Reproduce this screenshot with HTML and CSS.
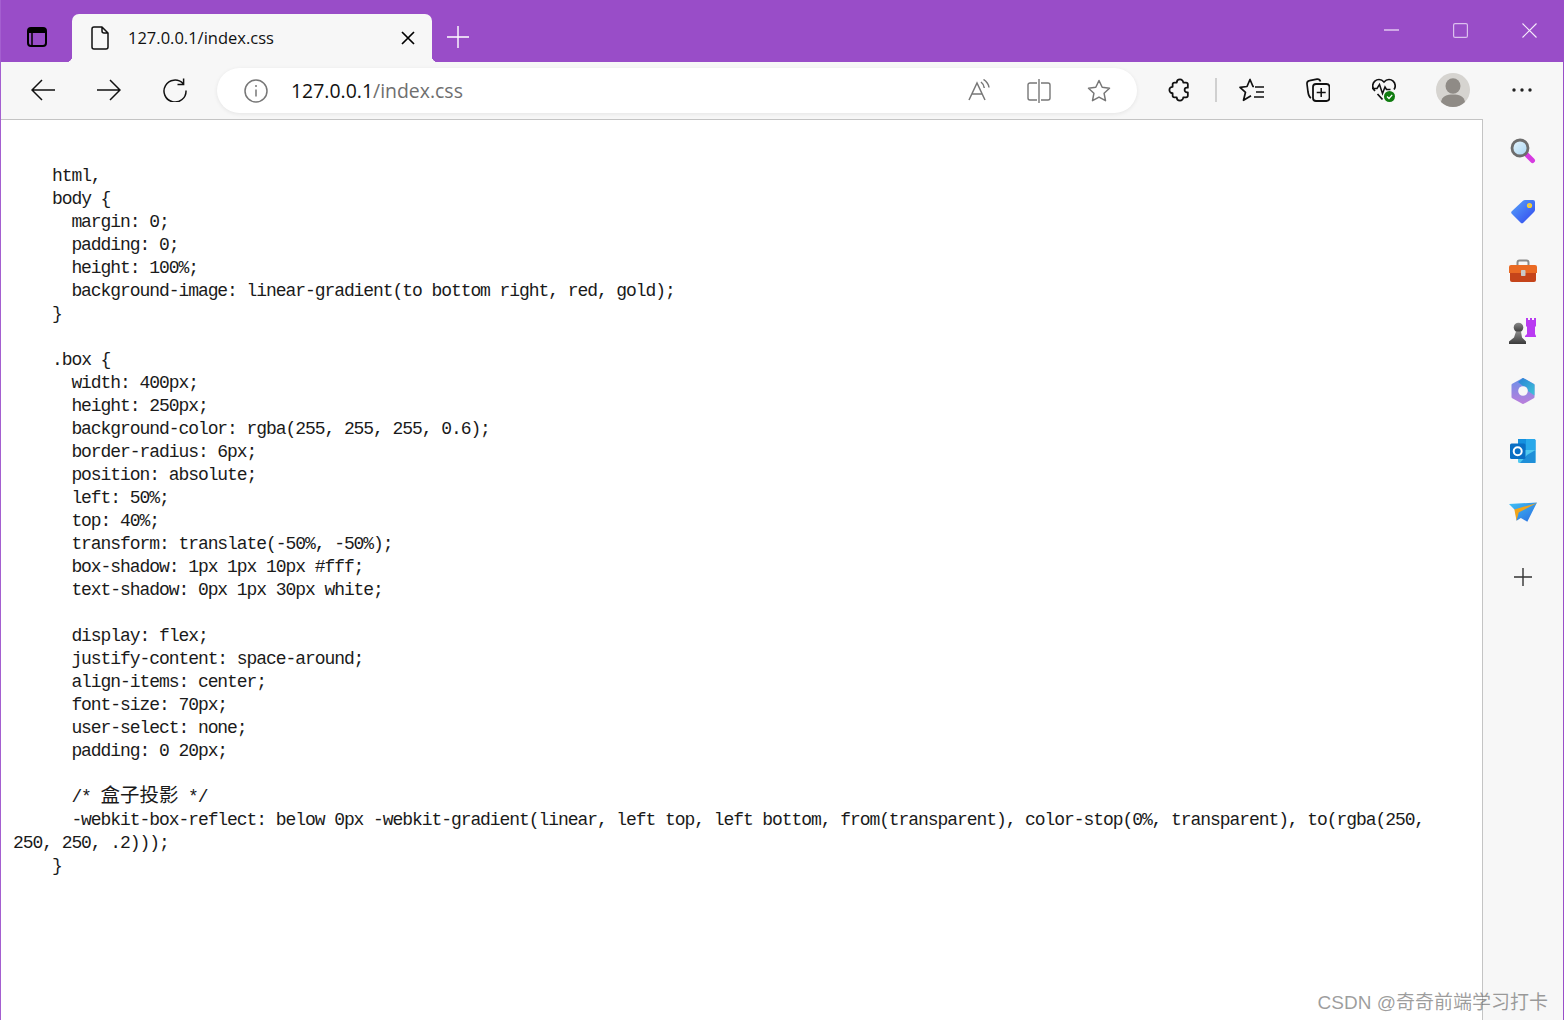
FILE: index.html
```html
<!DOCTYPE html>
<html lang="en">
<head>
<meta charset="utf-8">
<title>127.0.0.1/index.css</title>
<link rel="stylesheet" href="styles.css">
</head>
<body>
<div class="window">
  <header class="titlebar">
    <div class="tab-actions">
      <svg class="ic20" viewBox="0 0 20 20"><rect x="1" y="1" width="18" height="18" rx="3" fill="none" stroke="#000" stroke-width="2"/><path d="M1 4a3 3 0 0 1 3-3h12a3 3 0 0 1 3 3v2H1z" fill="#000"/><path d="M5 6v13" stroke="#000" stroke-width="1.5"/></svg>
    </div>
    <div class="tab">
      <svg class="ic-doc" viewBox="0 0 18 24"><path d="M1 3a2 2 0 0 1 2-2h8l6 6v14a2 2 0 0 1-2 2H3a2 2 0 0 1-2-2zM11 1v4a2 2 0 0 0 2 2h4" fill="none" stroke="#111" stroke-width="1.5" stroke-linejoin="round"/></svg>
      <span class="tab-title">127.0.0.1/index.css</span>
      <svg class="ic-x" viewBox="0 0 14 14"><path d="M1 1l12 12M13 1L1 13" stroke="#000" stroke-width="1.7"/></svg>
    </div>
    <svg class="ic-new" viewBox="0 0 22 22"><path d="M11 0v22M0 11h22" stroke="#fff" stroke-width="1.4"/></svg>
    <div class="win-controls">
      <svg class="win-btn" viewBox="0 0 15 15"><path d="M0 7h15" stroke="#f3e6fa" stroke-width="1.2"/></svg>
      <svg class="win-btn" viewBox="0 0 15 15"><rect x=".6" y=".6" width="13.8" height="13.8" rx="1.5" fill="none" stroke="#dcc0ee" stroke-width="1.2"/></svg>
      <svg class="win-btn" viewBox="0 0 15 15"><path d="M.5.5l14 14M14.5.5l-14 14" stroke="#f6ecfb" stroke-width="1.1"/></svg>
    </div>
  </header>

  <nav class="toolbar">
    <div class="btn"><svg class="ic24" viewBox="0 0 24 24"><path d="M1 12h23M11 2L1 12l10 10" fill="none" stroke="#111" stroke-width="1.5"/></svg></div>
    <div class="btn"><svg class="ic24" viewBox="0 0 24 24"><path d="M0 12h23M13 2l10 10-10 10" fill="none" stroke="#111" stroke-width="1.5"/></svg></div>
    <div class="btn"><svg class="ic24" viewBox="0 0 24 24"><path d="M20 5.500A11 11 0 1 0 23 12.500M20.600 .5V6.600H14.500" fill="none" stroke="#111" stroke-width="1.5"/></svg></div>
    <div class="address">
      <svg class="ic-info" viewBox="0 0 24 24"><circle cx="12" cy="12" r="11" fill="none" stroke="#777" stroke-width="1.5"/><path d="M12 10.500v7" stroke="#777" stroke-width="1.5"/><circle cx="12" cy="7" r="1" fill="#777"/></svg>
      <span class="url"><span class="url-host">127.0.0.1</span>/index.css</span>
      <svg class="ic24 addr-read" viewBox="0 0 24 24"><path d="M1 21L9 4l8 17M4 15h10M13 3c2 1.500 3 3.500 3.300 6M15.500 .5c3 2 5 4.500 5.500 8" fill="none" stroke="#777" stroke-width="1.5"/></svg>
      <svg class="ic24 addr-split" viewBox="0 0 24 24"><path d="M10 4H3a2 2 0 0 0-2 2v13a2 2 0 0 0 2 2h7M14 4h7a2 2 0 0 1 2 2v13a2 2 0 0 1-2 2h-7M12 0v24" fill="none" stroke="#777" stroke-width="1.4"/></svg>
      <svg class="ic24 addr-star" viewBox="0 0 24 24"><path d="M12 1.500l3.200 6.800 7.300.9-5.400 5.100 1.400 7.400L12 18.100 5.500 21.700l1.400-7.400L1.500 9.200l7.300-.9z" fill="none" stroke="#777" stroke-width="1.5" stroke-linejoin="round"/></svg>
    </div>
    <div class="btn btn-first"><svg class="ic24" viewBox="0 0 24 26"><path d="M8.500 5a3.500 3.500 0 0 1 7 0h3a2 2 0 0 1 2 2v3.500h-1a2.500 2.500 0 0 0 0 5h1V19a2 2 0 0 1-2 2h-3a3.500 3.500 0 0 1-7 0H6a2 2 0 0 1-2-2v-2.500a3.500 3.500 0 0 1 0-7V7a2 2 0 0 1 2-2z" fill="none" stroke="#111" stroke-width="1.900" stroke-linejoin="round"/></svg></div>
    <span class="divider"></span>
    <div class="btn"><svg class="ic26" viewBox="0 0 26 24"><path d="M15 8.500h-1L11 1.500 8 8.500l-7 .8 5.500 5-2 8 7.500-4.500M16 9h9M17 14h8M15 19h10" fill="none" stroke="#111" stroke-width="1.700" stroke-linejoin="round"/></svg></div>
    <div class="btn"><svg class="ic24" viewBox="0 0 24 24"><path d="M5 20C3 19 2.500 17 2 14L1 6c-.2-2 .6-3 2.500-3.300L11 1.200c2-.3 3 .6 3.500 2.300" fill="none" stroke="#111" stroke-width="1.7"/><rect x="7" y="6" width="16.500" height="17" rx="3" fill="none" stroke="#111" stroke-width="1.800"/><path d="M15.200 10v9M10.700 14.500h9" stroke="#111" stroke-width="1.500"/></svg></div>
    <div class="btn"><svg class="ic24" viewBox="0 0 24 24"><path d="M3 13C1 11 .5 9.500.7 7.500 1 4 4 1.500 7 1.500c2 0 3.700 1 5 2.500 1.300-1.500 3-2.500 5-2.500 3 0 6 2.500 6.200 6 .1 1.500-.4 3-1.200 4M5.500 16l5 5.500" fill="none" stroke="#111" stroke-width="1.700"/><path d="M0 10.500h5l2.500-4 3 9 2.500-6.500 1.500 2.500h4" fill="none" stroke="#111" stroke-width="1.500"/><circle cx="17.500" cy="18.500" r="5.500" fill="#107c10"/><path d="M15 18.500l2 2 3.200-3.600" fill="none" stroke="#fff" stroke-width="1.300"/></svg></div>
    <div class="btn btn-avatar"><svg class="ic-avatar" viewBox="0 0 34 34"><circle cx="17" cy="17" r="17" fill="#d6d4d0"/><ellipse cx="17" cy="13" rx="7.500" ry="7.800" fill="#8f8b86"/><path d="M5 29c1-6 6-7.500 12-7.500s11 1.500 12 7.500a17 17 0 0 1-24 0z" fill="#8f8b86"/></svg></div>
    <div class="btn"><svg class="ic-dots" viewBox="0 0 20 4"><circle cx="2" cy="2" r="1.700" fill="#222"/><circle cx="10" cy="2" r="1.700" fill="#222"/><circle cx="18" cy="2" r="1.700" fill="#222"/></svg></div>
  </nav>

  <div class="main">
<pre class="code">    html,
    body {
      margin: 0;
      padding: 0;
      height: 100%;
      background-image: linear-gradient(to bottom right, red, gold);
    }

    .box {
      width: 400px;
      height: 250px;
      background-color: rgba(255, 255, 255, 0.6);
      border-radius: 6px;
      position: absolute;
      left: 50%;
      top: 40%;
      transform: translate(-50%, -50%);
      box-shadow: 1px 1px 10px #fff;
      text-shadow: 0px 1px 30px white;

      display: flex;
      justify-content: space-around;
      align-items: center;
      font-size: 70px;
      user-select: none;
      padding: 0 20px;

      /* <span class="cjk">盒子投影</span> */
      -webkit-box-reflect: below 0px -webkit-gradient(linear, left top, left bottom, from(transparent), color-stop(0%, transparent), to(rgba(250, 250, 250, .2)));
    }
</pre>
    <aside class="sidebar">
      <div class="side-item"><svg class="ic26" viewBox="0 0 26 26"><defs><linearGradient id="gl" x1="0" y1="0" x2="1" y2="1"><stop offset="0" stop-color="#e8f6fd"/><stop offset="1" stop-color="#a5d4f2"/></linearGradient></defs><path d="M15.500 15.500l7 7" stroke="#d63be0" stroke-width="5" stroke-linecap="round"/><circle cx="10" cy="10" r="8" fill="url(#gl)" stroke="#6d6d6d" stroke-width="2.800"/></svg></div>
      <div class="side-item"><svg class="ic26" viewBox="0 -1 26 26"><defs><linearGradient id="gt" x1="0" y1="0" x2="1" y2="1"><stop offset="0" stop-color="#57a5fa"/><stop offset="1" stop-color="#3246ee"/></linearGradient></defs><path d="M15 1h8a2 2 0 0 1 2 2v8a3 3 0 0 1-1 2L13.500 23.500a2 2 0 0 1-3 0L2 15a2 2 0 0 1 0-3L13 1.800A3 3 0 0 1 15 1z" fill="url(#gt)"/><circle cx="19.500" cy="6.500" r="2.600" fill="#ffd21f"/><circle cx="19.500" cy="6.500" r="1" fill="#9db4e8"/></svg></div>
      <div class="side-item"><svg class="ic28" viewBox="0 0 28 26"><path d="M8.500 7V4.500A2 2 0 0 1 10.500 2.500h7a2 2 0 0 1 2 2V7" fill="none" stroke="#8a8a8a" stroke-width="2"/><path d="M0 9a2 2 0 0 1 2-2h24a2 2 0 0 1 2 2v6H0z" fill="#ea6a24"/><path d="M1 15h26v7a2 2 0 0 1-2 2H3a2 2 0 0 1-2-2z" fill="#c5441a"/><rect x="12" y="12" width="4.500" height="6" rx=".8" fill="#c9c9c9"/></svg></div>
      <div class="side-item"><svg class="ic28" viewBox="0 0 28 28"><defs><linearGradient id="gp" x1="0" y1="0" x2="0" y2="1"><stop offset="0" stop-color="#8a8a8a"/><stop offset="1" stop-color="#3a3a3a"/></linearGradient></defs><path d="M17 1h2v2h2V1h2v2h2V1h2v8l-1 1v7l1 2v1H16v-1l2-2v-7l-1-1z" fill="#b93af2"/><circle cx="9.500" cy="10.500" r="4.800" fill="url(#gp)"/><path d="M7 14.500h5l1 6 4 4v2.500H0v-2.500l5-4z" fill="url(#gp)"/></svg></div>
      <div class="side-item"><svg class="ic26" viewBox="0 0 26 26"><defs><linearGradient id="gm1" x1="0" y1="0" x2="1" y2="1"><stop offset="0" stop-color="#2a7fd6"/><stop offset="1" stop-color="#40c4d8"/></linearGradient><linearGradient id="gm2" x1="0" y1="0" x2="0" y2="1"><stop offset="0" stop-color="#6f8fe8"/><stop offset="1" stop-color="#b77fdc"/></linearGradient></defs><path d="M13 1.500l10 5.500v12l-10 5.500L3 19V7z" fill="url(#gm2)" stroke="url(#gm2)" stroke-width="3" stroke-linejoin="round"/><path d="M13 0l11.500 6.500v11L18 13a5 5 0 0 0-5-5L8 4z" fill="url(#gm1)"/><circle cx="13" cy="13" r="4.800" fill="#f7f7f7"/></svg></div>
      <div class="side-item"><svg class="ic26" viewBox="0 0 26 26"><path d="M8 1h16a1.500 1.500 0 0 1 1.500 1.500V12H8z" fill="#1490df"/><path d="M16 1h8a1.500 1.500 0 0 1 1.500 1.500V12H16z" fill="#28a8ea"/><path d="M8 12h17.500v11.500A1.500 1.500 0 0 1 24 25H9.500A1.500 1.500 0 0 1 8 23.500z" fill="#50c8f0"/><path d="M17 17l8.500-5v13H10z" fill="#1f8fd8"/><rect x="0" y="5.500" width="15.500" height="15.500" rx="1.500" fill="#0a6fc4"/><circle cx="7.700" cy="13.200" r="4" fill="none" stroke="#fff" stroke-width="2"/></svg></div>
      <div class="side-item"><svg class="ic28" viewBox="0 -2 26 20"><defs><linearGradient id="gs" x1="0" y1="0" x2="1" y2="1"><stop offset="0" stop-color="#3fc2f5"/><stop offset="1" stop-color="#2b6be0"/></linearGradient></defs><path d="M0 1.500L26 0 17 18l-6-3.500L7 17 6 7.500z" fill="url(#gs)"/><path d="M5 6.500L26 .5 9 9.500 7 17z" fill="#f2a51a"/></svg></div>
      <div class="side-item side-add"><svg class="ic-add" viewBox="0 0 18 18"><path d="M9 0v18M0 9h18" stroke="#333" stroke-width="1.400"/></svg></div>
    </aside>
  </div>
  <div class="watermark">CSDN @奇奇前端学习打卡</div>
</div>
</body>
</html>
```
FILE: styles.css
```css
* { box-sizing: border-box; }
html, body { margin: 0; padding: 0; height: 100%; background: #fff; overflow: hidden; }
svg { display: block; flex: none; }

.window {
  position: relative;
  height: 1020px;
  display: flex;
  flex-direction: column;
  border-left: 1px solid #a45fd0;
  border-right: 1px solid #994ec9;
}

/* title bar */
.titlebar {
  height: 62px;
  flex: none;
  background: #994dc8;
  display: flex;
  align-items: flex-start;
}
.tab-actions { width: 71px; height: 62px; padding: 27px 0 0 26px; }
.ic20 { width: 20px; height: 20px; }
.tab {
  position: relative;
  width: 360px;
  height: 48px;
  margin-top: 14px;
  background: #f7f7f7;
  border-radius: 7px 7px 0 0;
  display: flex;
  align-items: center;
  padding-left: 19px;
}
.tab::before, .tab::after {
  content: "";
  position: absolute;
  bottom: 0;
  width: 6px;
  height: 6px;
}
.tab::before { left: -6px; background: radial-gradient(circle at 0 0, #994dc8 6px, #f7f7f7 6.5px); }
.tab::after { right: -6px; background: radial-gradient(circle at 100% 0, #994dc8 6px, #f7f7f7 6.5px); }
.ic-doc { width: 18px; height: 24px; }
.tab-title {
  margin-left: 19px;
  font: 16.5px/24px "Open Sans", sans-serif;
  color: #111;
  flex: 1;
}
.ic-x { width: 14px; height: 14px; margin-right: 17px; }
.ic-new { width: 22px; height: 22px; margin: 26px 0 0 15px; }
.win-controls {
  margin-left: auto;
  display: flex;
  gap: 54px;
  padding: 23px 26px 0 0;
}
.win-btn { width: 15px; height: 15px; }

/* toolbar */
.toolbar {
  height: 57px;
  flex: none;
  background: #f7f7f7;
  display: flex;
  align-items: center;
  padding-left: 9px;
}
.btn {
  width: 66px;
  height: 45px;
  margin-bottom: 2px;
  flex: none;
  display: flex;
  align-items: center;
  justify-content: center;
}
.btn-first { margin-left: 10px; }
.btn-avatar { margin-left: 3px; margin-right: 3px; }
.ic24 { width: 24px; height: 24px; }
.ic26 { width: 26px; height: 26px; }
.ic28 { width: 28px; height: 28px; }
.ic-avatar { width: 34px; height: 34px; }
.ic-dots { width: 20px; height: 4px; }
.divider { width: 2px; height: 24px; background: #d0d0d0; margin: 0 2px 2px 2px; flex: none; }
.address {
  flex: 0 0 920px;
  height: 45px;
  margin-left: 9px;
  background: #fff;
  border-radius: 23px;
  box-shadow: 0 1px 4px rgba(0, 0, 0, .08);
  display: flex;
  align-items: center;
  padding-left: 27px;
}
.ic-info { width: 24px; height: 24px; }
.url {
  margin-left: 23px;
  padding-top: 1px;
  font: 19.45px/28px "Open Sans", sans-serif;
  color: #6f6f6f;
  flex: 1;
}
.url-host { color: #111; }
.addr-split { margin-left: 35px; }
.addr-star { margin: 0 26px 0 36px; }

/* content */
.main { flex: 1; min-height: 0; display: flex; }
.code {
  flex: 1;
  min-width: 0;
  margin: 0;
  padding: 45px 13px 0 12px;
  border-top: 1px solid #c4c4c4;
  font: 18px/23px "Liberation Mono", monospace;
  letter-spacing: -1.07px;
  color: #1a1a1a;
  white-space: pre-wrap;
  background: #fff;
}
.cjk {
  font-family: "Noto Sans CJK SC", sans-serif;
  font-size: 19.45px;
  line-height: 0;
  letter-spacing: 0;
}
.sidebar {
  flex: 0 0 81px;
  background: #f7f7f7;
  border-left: 1px solid #c4c4c4;
  display: flex;
  flex-direction: column;
  align-items: center;
  padding-top: 2px;
}
.side-item {
  height: 60px;
  width: 100%;
  flex: none;
  display: flex;
  align-items: center;
  justify-content: center;
}
.side-add { margin-top: 6px; }
.ic-add { width: 18px; height: 18px; }

.watermark {
  position: absolute;
  right: 15px;
  bottom: 5px;
  font: 19px/24px "Liberation Sans", "Noto Sans CJK SC", sans-serif;
  color: rgba(60, 60, 60, .5);
}
```
